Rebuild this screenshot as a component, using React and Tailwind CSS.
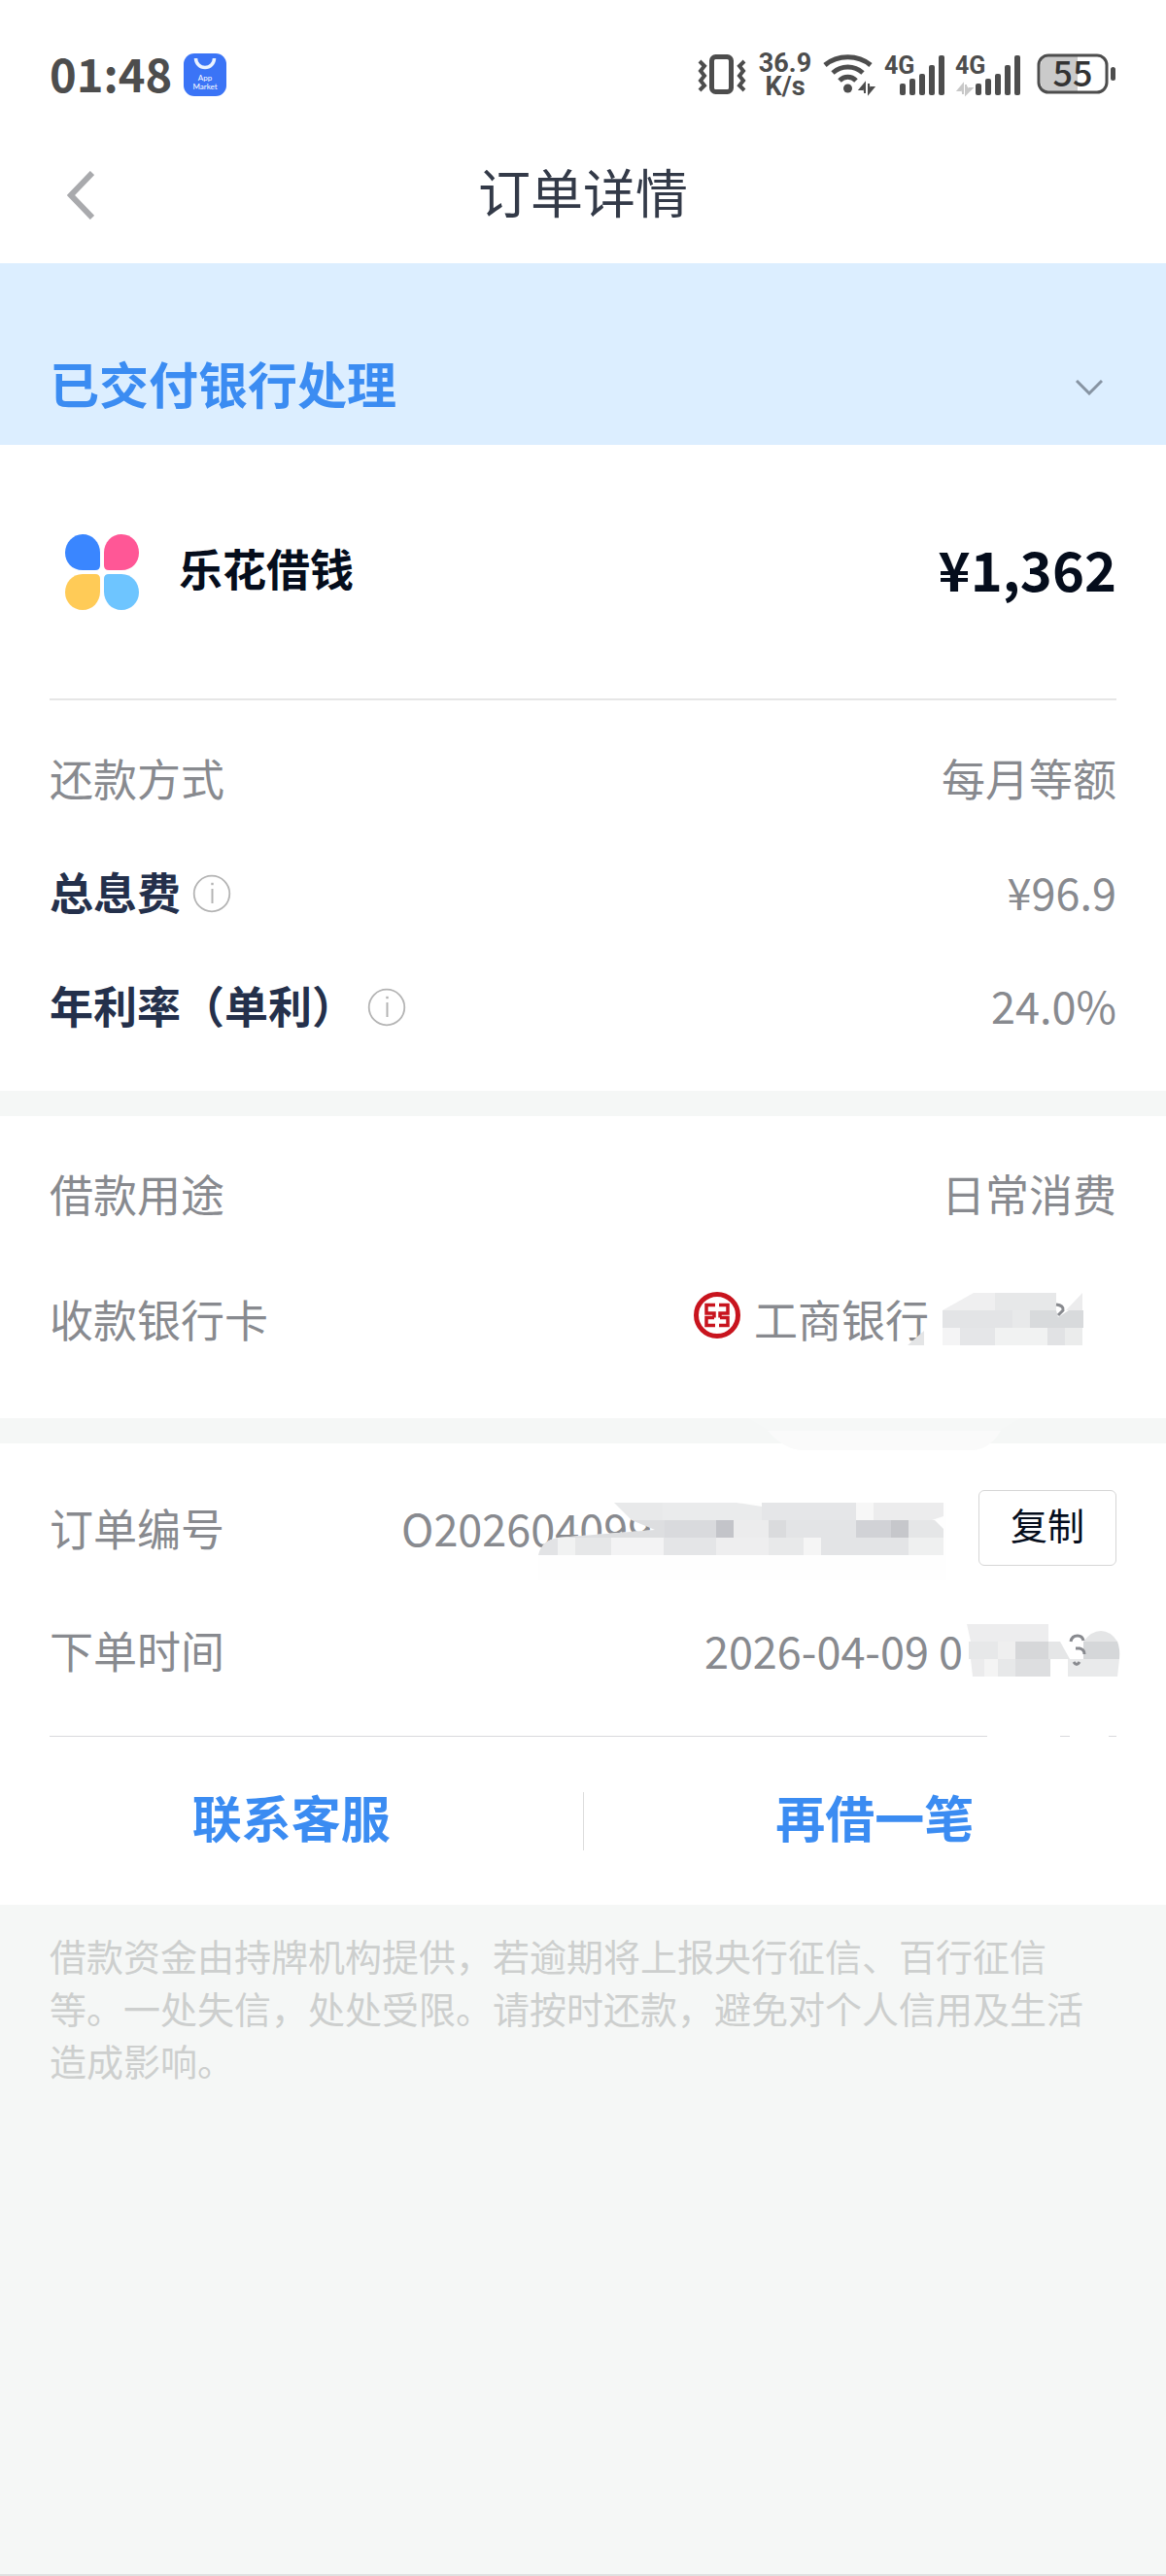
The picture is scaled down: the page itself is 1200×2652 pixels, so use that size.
import React, { useState } from 'react';

const AVISO = "借款资金由持牌机构提供，若逾期将上报央行征信、百行征信等。一处失信，处处受限。请按时还款，避免对个人信用及生活造成影响。"

function InfoIcon() {
    return (
        <svg className="w-10 h-10" viewBox="0 0 40 40" fill="none" stroke="#b4b4b4">
            <circle cx="20" cy="20" r="18.3" strokeWidth="1.8" />
            <path d="M20.500 15v15" strokeWidth="2" />
            <path d="M20.500 8.800v2.400" strokeWidth="2.4" />
        </svg>
    )
}

function Bars() {
    return (
        <g fill="#4d4d4d">
            <rect x="0" y="30" width="6" height="12" rx="2" />
            <rect x="10" y="25" width="6" height="17" rx="2" />
            <rect x="20" y="20" width="6" height="22" rx="2" />
            <rect x="30" y="11" width="6" height="31" rx="2" />
            <rect x="40" y="1" width="6" height="41" rx="2" />
        </g>
    )
}

function StatusBar() {
    return (
        <div className="flex items-center justify-between h-[154px] px-[51px] text-[#4d4d4d]">
            <div className="flex items-center gap-3">
                <span className="pb-1.5 text-[47px] leading-none font-bold">01:48</span>
                <svg className="w-11 h-11 overflow-visible" viewBox="0 0 44 44">
                    <rect width="44" height="44" rx="11" fill="#3b74f6" />
                    <path d="M12.500 5a9.500 9.500 0 0 0 19 0" fill="none" stroke="#eaf2ff" strokeWidth="3.5" />
                    <text x="22" y="28" fontSize="8" textAnchor="middle" fontFamily="Lato, sans-serif" fill="#fff">App</text>
                    <text x="22" y="37" fontSize="8" textAnchor="middle" fontFamily="Lato, sans-serif" fill="#fff">Market</text>
                </svg>
            </div>
            <div className="flex items-center gap-3">
                <svg className="w-[50px] h-11" viewBox="0 0 50 44" fill="none" stroke="#4d4d4d">
                    <rect x="14.500" y="3.500" width="20" height="36" rx="4" strokeWidth="5" />
                    <path d="M2 8l5 5-4 5 4 5-4 5 4 5-5 5M48 8l-5 5 4 5-4 5 4 5-4 5 5 5" strokeWidth="4" />
                </svg>
                <div className="w-14 text-[27px] leading-[24px] font-bold text-center font-[Roboto,sans-serif]">
                    <p>36.9</p>
                    <p>K/s</p>
                </div>
                <svg className="w-[51px] h-11 overflow-visible" viewBox="0 0 51 44" fill="none" stroke="#4d4d4d">
                    <path d="M1 12c13-11 34-11 47 0M9 20c9-8 22-8 31 0M16 28c5-5 12-5 17 0" strokeWidth="5" />
                    <circle cx="24.500" cy="36" r="4.500" fill="#4d4d4d" stroke="none" />
                    <path d="M42 41V31l-5 6h3M46 31v10l5-6h-3" strokeWidth="2" fill="#4d4d4d" />
                </svg>
                <svg className="w-[61px] h-11 overflow-visible" viewBox="0 0 61 44">
                    <g transform="translate(15 1)"><Bars /></g>
                    <text x="-1" y="21" fontSize="25" fontWeight="700" fontFamily="Roboto, sans-serif" fill="#4d4d4d">4G</text>
                </svg>
                <svg className="w-[67px] h-11 overflow-visible" viewBox="0 0 67 44">
                    <g transform="translate(20 1)"><Bars /></g>
                    <path d="M7 42V32l-5 6h3M10 32v10l6-6h-3" fill="#c8c8c8" stroke="#c8c8c8" strokeWidth="2" />
                    <text x="-1" y="21" fontSize="25" fontWeight="700" fontFamily="Roboto, sans-serif" fill="#4d4d4d">4G</text>
                </svg>
                <svg className="w-[82px] h-11 ml-1 overflow-visible" viewBox="0 0 82 44">
                    <path d="M14 3h28v36H14c-7 0-10-4-10-10V13C4 7 7 3 14 3z" fill="#cacaca" />
                    <rect x="2" y="2" width="70" height="38" rx="10" fill="none" stroke="#4d4d4d" strokeWidth="3" />
                    <rect x="76" y="14" width="5" height="14" rx="2.5" fill="#4d4d4d" />
                    <text x="37" y="34" fontSize="36" fontWeight="500" textAnchor="middle" fontFamily="'Noto Sans CJK SC', sans-serif" fill="#333">55</text>
                </svg>
            </div>
        </div>
    )
}

function Row({ label, bold, info, children }) {
    return (
        <div className="flex items-center justify-between h-[117px] pb-1 text-[45px] leading-none">
            <div className="flex items-center gap-3">
                <span className={bold ? "font-bold text-[#24304b]" : ""}>{label}</span>
                {info && <button type="button" aria-label={label} className="mt-1"><InfoIcon /></button>}
            </div>
            {children}
        </div>
    )
}

// Mosaico para los ultimos digitos de la tarjeta
function CardMask() {
    return (
        <svg className="w-[184px] h-[54px] -ml-[22px]" viewBox="0 0 184 54">
            <path d="M0 54l17-15v15z" fill="#e4e5e6" />
            <path d="M36 18L68 0h22v18z" fill="#efeff0" />
            <path d="M90 0h63v18H90z" fill="#e7e8e9" />
            <path d="M36 18h72v18H36z" fill="#e3e4e6" />
            <path d="M108 18h18v18h-18z" fill="#e8e9ea" />
            <path d="M126 18h27l2 7 11-7h15v18h-55z" fill="#d8dadc" />
            <path d="M153 12q8 1 7 6l-5 5" fill="none" stroke="#888a8f" strokeWidth="3" />
            <path d="M163 18L180 0v18z" fill="#ececed" />
            <path d="M36 36h18v18H36z" fill="#f4f4f5" />
            <path d="M54 36h36v18H54z" fill="#e5e6e8" />
            <path d="M90 36h54v18H90z" fill="#f1f2f2" />
            <path d="M144 36h18v18h-18z" fill="#e1e2e4" />
            <path d="M162 36h18v18h-18z" fill="#ebecec" />
        </svg>
    )
}

function OrderMask() {
    return (
        <svg className="absolute left-[141px] top-[-3px] w-[420px] h-[80px]" viewBox="0 0 420 80">
            <path d="M0 56q3-17 20-20l100-8-43-28h343v80H0z" fill="#fefefe" />
            <path d="M78 0h50v18H96z" fill="#e8e9ea" />
            <path d="M128 0h76l26 4v14H128z" fill="#eaebec" />
            <path d="M230 0h97v18h-97z" fill="#e5e6e8" />
            <path d="M327 0h18v18h-18z" fill="#f7f7f7" />
            <path d="M345 0h72v14l-12 4h-60z" fill="#ececed" />
            <path d="M96 18h60v18H20l100-8z" fill="#dddee0" />
            <path d="M130 18h53v18h-53z" fill="#d9dadd" />
            <path d="M183 18h18v18h-18z" fill="#c3c4c9" />
            <path d="M201 18h36v18h-36z" fill="#ececed" />
            <path d="M237 18h18v18h-18z" fill="#dadbdd" />
            <path d="M255 18h72v18h-72z" fill="#e3e4e6" />
            <path d="M327 18h36v18h-36z" fill="#d1d2d6" />
            <path d="M363 18h18v18h-18z" fill="#c6c7cb" />
            <path d="M381 18h27l9 9v9h-36z" fill="#e5e6e7" />
            <path d="M0 54q3-15 20-18v18z" fill="#e2e3e5" />
            <path d="M20 36h18v18H20z" fill="#f1f2f2" />
            <path d="M38 36h37v18H38z" fill="#e6e7e8" />
            <path d="M75 36h54v18H75z" fill="#f3f3f4" />
            <path d="M129 36h54v18h-54z" fill="#e4e5e7" />
            <path d="M183 36h54v18h-54z" fill="#eeeeef" />
            <path d="M237 36h36v18h-36z" fill="#e8e9ea" />
            <path d="M273 36h18v18h-18z" fill="#f5f5f5" />
            <path d="M291 36h90v18h-90z" fill="#e3e4e6" />
            <path d="M381 36h36v18h-36z" fill="#eff0f0" />
        </svg>
    )
}

function TimeMask() {
    return (
        <svg className="w-[158px] h-[54px] -mr-1" viewBox="0 0 158 54">
            <path d="M0 0h84v18H4z" fill="#ededee" />
            <path d="M2 18h48v18H2z" fill="#e7e8e9" />
            <path d="M32 18h18v18H32z" fill="#efefef" />
            <path d="M50 18h34v18H50z" fill="#d6d7d9" />
            <path d="M84 18h12l10 18H84z" fill="#e5e6e7" />
            <path d="M4 36h14v18H6z" fill="#ebebec" />
            <path d="M18 36h14v18H18z" fill="#f4f4f4" />
            <path d="M32 36h18v18H32z" fill="#e7e8e9" />
            <path d="M50 36h36v18H50z" fill="#dddee0" />
            <path d="M120 18h35q3 8 2 18h-37z" fill="#d5d7d9" />
            <path d="M120 18q8-11 18-11t17 11z" fill="#e4e5e6" />
            <path d="M104 36h53l-2 18h-51z" fill="#e9eaeb" />
            <path d="M107 18q1-6 7-6 5 0 6 5M112 25h4q5 1 5 6M110 39q3 5 6 0" fill="none" stroke="#888a8f" strokeWidth="3" />
        </svg>
    )
}

function App() {
    const [abierto, setAbierto] = useState(false)
    const [copiado, setCopiado] = useState(false)

    return (
        <div className="min-h-screen bg-[#f5f7f6] border-b-2 border-[#e0e0e0] text-[#888a8f] font-['Noto_Sans_CJK_SC',sans-serif]">
            <header className="bg-white">
                <StatusBar />
                <div className="grid grid-cols-3 items-center h-[117px] px-[51px] pb-6">
                    <button type="button" aria-label="返回" className="ml-[18px] w-7">
                        <svg className="w-7 h-[50px]" viewBox="0 0 28 50" fill="none" stroke="#a9aaad" strokeWidth="6">
                            <path d="M26 2L4 25l22 23" />
                        </svg>
                    </button>
                    <h1 className="pb-2 text-[54px] leading-none text-center text-[#333a48]">订单详情</h1>
                </div>
            </header>

            {/* Estado del pedido */}
            <button type="button" onClick={() => setAbierto(!abierto)} className="flex items-center justify-between w-full h-[187px] pl-[51px] pr-[65px] pt-[68px] bg-[#dceeff]">
                <span className="pb-2 text-[51px] leading-none font-bold text-[#3b8cf2]">已交付银行处理</span>
                <svg className="w-7 h-4" viewBox="0 0 28 16" fill="none" stroke="#8794a3" strokeWidth="3">
                    <path d="M1 1l13 13L27 1" />
                </svg>
            </button>

            <section className="bg-white px-[51px] pb-[28px]">
                <div className="flex items-center justify-between h-[263px] border-b-2 border-[#e6e6e6] text-[#050d1c] font-bold">
                    <div className="flex items-center">
                        <svg className="w-[78px] h-[78px] ml-[15px] mr-10" viewBox="0 0 78 78">
                            <path d="M19 0c10 0 18 8 18 19v13q0 5-5 5H19C8 37 1 29 1 19S9 0 19 0z" fill="#3a86ff" />
                            <path d="M59 0c11 0 18 9 18 19S70 37 59 37H46q-5 0-5-5V19C41 8 49 0 59 0z" fill="#ff5796" />
                            <path d="M19 41h13q5 0 5 5v13c0 11-8 19-18 19S1 70 1 60s7-19 18-19z" fill="#ffcb57" />
                            <path d="M46 41h13c11 0 18 9 18 19s-8 18-18 18-18-8-18-19V46q0-5 5-5z" fill="#6ec5ff" />
                        </svg>
                        <h2 className="pb-2 text-[45px] leading-none">乐花借钱</h2>
                    </div>
                    <span className="pb-2 text-[56px] leading-none">¥1,362</span>
                </div>
                <div className="pt-[23px]">
                    <Row label="还款方式"><span>每月等额</span></Row>
                    <Row label="总息费" bold info><span>¥96.9</span></Row>
                    <Row label="年利率（单利）" bold info><span>24.0%</span></Row>
                </div>
            </section>

            <section className="mt-[26px] bg-white px-[51px] pt-[23px] pb-[42px]">
                <Row label="借款用途"><span>日常消费</span></Row>
                <div className="pt-3">
                    <Row label="收款银行卡">
                        <div className="flex items-center pr-[31px]">
                            <svg className="w-12 h-12 mr-[14px] mb-2" viewBox="0 0 48 48" fill="none" stroke="#c8141e">
                                <circle cx="24" cy="24" r="21.5" strokeWidth="5" />
                                <path d="M22 13.500H13v8.500h8v4.500M22 34.500H13v-8h8M26 13.500h9v8.500h-8v4.500M26 34.500h9v-8h-8" strokeWidth="3.5" />
                            </svg>
                            <span>工商银行</span>
                            <CardMask />
                        </div>
                    </Row>
                </div>
            </section>

            {/* Separador con la zona borrada por el mosaico */}
            <div className="relative h-[26px]">
                <svg className="absolute right-[150px] top-0 w-[280px] h-9" viewBox="0 0 280 36">
                    <path d="M0 0h280l-22 13-8 9H38L20 12z" fill="#f6f8f7" />
                    <path d="M20 13h240q-12 20-30 20H56q-18 0-36-20z" fill="#fafafa" />
                </svg>
            </div>

            <section className="bg-white px-[51px]">
                <div className="pt-[30px]">
                    <Row label="订单编号">
                        <div className="flex items-center">
                            <div className="relative w-[594px]">
                                <span>O202604099</span>
                                <OrderMask />
                            </div>
                            <button type="button" onClick={() => setCopiado(!copiado)} className="w-[142px] h-[78px] pb-2 border border-[#d6d6d6] rounded-md text-[38px] leading-none text-[#050d1c]">复制</button>
                        </div>
                    </Row>
                </div>
                <div className="pt-[9px] pb-7">
                    <Row label="下单时间">
                        <div className="flex items-center gap-1">
                            <span>2026-04-09 0</span>
                            <TimeMask />
                        </div>
                    </Row>
                </div>
                <div className="flex h-px bg-[#d9d9dc]">
                    <div className="ml-auto mr-[10px] w-[75px] bg-white" />
                    <div className="mr-2 w-10 bg-white" />
                </div>
                <div className="flex items-center h-[173px] -mx-[51px] text-[51px] leading-none font-bold text-[#3b8cf2]">
                    <button type="button" className="flex-1 pb-2">联系客服</button>
                    <div className="w-px h-[60px] bg-[#dcdcdc]" />
                    <button type="button" className="flex-1 pb-2">再借一笔</button>
                </div>
            </section>

            <p className="px-[51px] pt-[25px] text-[38px] leading-[54px] text-[#cdcfce]">{AVISO}</p>
        </div>
    );
}

export default App;
